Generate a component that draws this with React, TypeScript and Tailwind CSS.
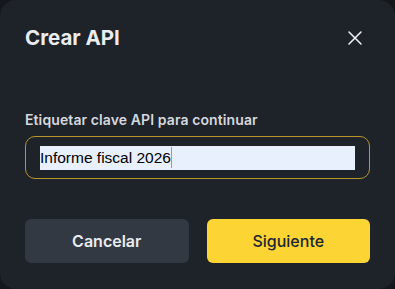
import { X } from 'lucide-react'

export default function App() {
  return (
    <div className="w-[395px] h-[289px] bg-[#14171c]" style={{ fontFamily: 'Inter, "Noto Sans", sans-serif' }}>
      <div className="w-full h-full rounded-2xl bg-[#1e2229] px-[25px] pt-[24px] flex flex-col">
        <div className="flex items-center justify-between h-7">
          <h2 className="text-[20.5px] font-bold text-[#eaecef]">Crear API</h2>
          <button className="text-[#eaecef] mr-[3px]">
            <X className="w-6 h-6" strokeWidth={1.6} />
          </button>
        </div>

        <label className="mt-[58px] text-[14px] leading-5 font-semibold text-[#d5d8dd] tracking-[0.1px]">
          Etiquetar clave API para continuar
        </label>
        <div className="mt-[6px] h-[43px] rounded-[10px] border border-[#b8962a] flex items-center px-[14px]">
          <div className="flex-1 h-6 bg-[#e8f0fe] flex items-center">
            <span className="text-[15.5px] text-black" style={{ fontFamily: '"Liberation Sans", Arial, sans-serif' }}>
              Informe fiscal 2026
            </span>
            <span className="w-px h-[21px] bg-[#c99f1a]" />
          </div>
        </div>

        <div className="mt-[40px] grid grid-cols-2 gap-[18px]">
          <button className="h-[44px] rounded-md bg-[#323943] text-[16px] font-semibold text-[#eaecef]">
            Cancelar
          </button>
          <button className="h-[44px] rounded-md bg-[#fcd535] text-[16px] font-medium text-[#202630]">
            Siguiente
          </button>
        </div>
      </div>
    </div>
  )
}
